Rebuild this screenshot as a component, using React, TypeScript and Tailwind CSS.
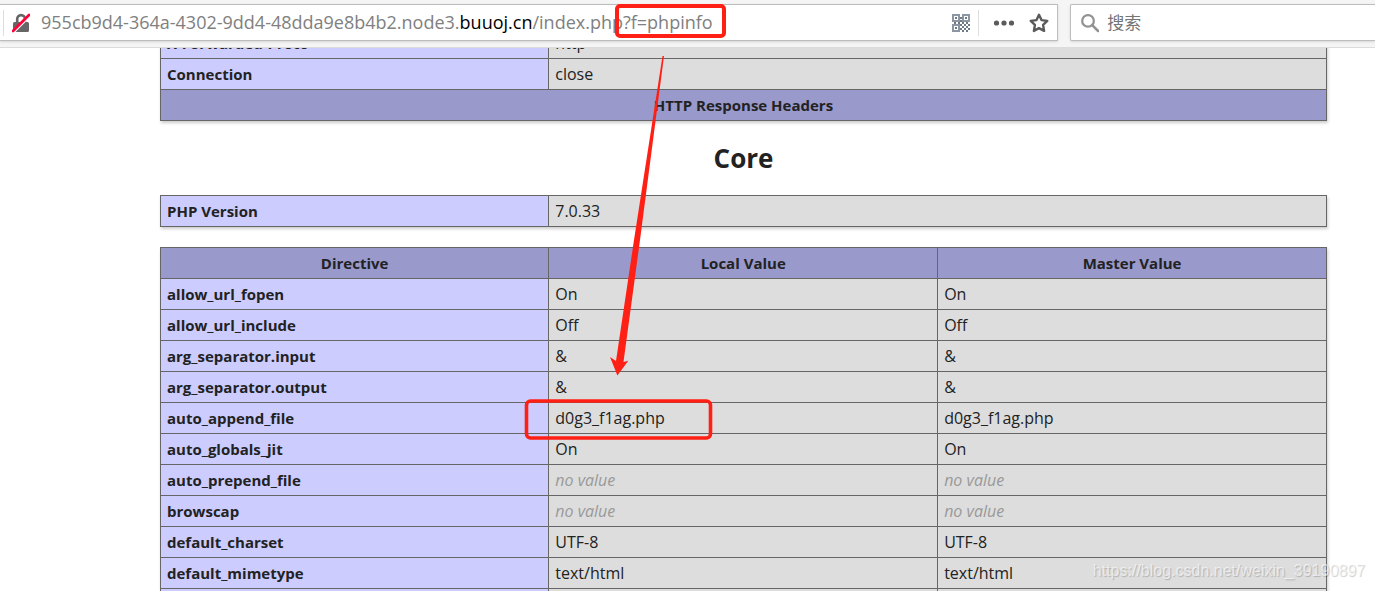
import React from 'react';

type Directive = { name: string; local?: string; master?: string };

const directives: Directive[] = [
  { name: 'allow_url_fopen', local: 'On', master: 'On' },
  { name: 'allow_url_include', local: 'Off', master: 'Off' },
  { name: 'arg_separator.input', local: '&', master: '&' },
  { name: 'arg_separator.output', local: '&', master: '&' },
  { name: 'auto_append_file', local: 'd0g3_f1ag.php', master: 'd0g3_f1ag.php' },
  { name: 'auto_globals_jit', local: 'On', master: 'On' },
  { name: 'auto_prepend_file' },
  { name: 'browscap' },
  { name: 'default_charset', local: 'UTF-8', master: 'UTF-8' },
  { name: 'default_mimetype', local: 'text/html', master: 'text/html' },
  { name: 'disable_classes' },
];

const tableClass = "w-full table-fixed border-collapse shadow-[1px_2px_3px_#ccc]";
const nameClass = "h-[31px] border border-[#666] bg-[#ccccff] px-1.5 text-left font-bold";
const valueClass = "h-[31px] border border-[#666] bg-[#dddddd] px-1.5 text-base leading-5";
const headClass = "h-[31px] border border-[#666] bg-[#9999cc] px-1.5 text-center font-bold";

const InsecureIcon: React.FC = () => (
  <svg width="18" height="20" viewBox="0 0 18 20" fill="none" aria-hidden="true">
    <path d="M5.200 10V6a3.900 3.900 0 0 1 7.800 0v4" stroke="#666" strokeWidth="2.600" />
    <rect x="1" y="9" width="16" height="10" rx="1.500" fill="#666" />
    <path d="M2.200 19.200 18.200 3.200" stroke="#fff" strokeWidth="1.500" />
    <path d="M1 18 17 2" stroke="#ff0039" strokeWidth="2.600" strokeLinecap="round" />
  </svg>
);

const QrIcon: React.FC = () => (
  <svg width="18" height="18" viewBox="0 0 18 18" fill="none" aria-hidden="true">
    <g stroke="#8c96a2" strokeWidth="2">
      <rect x="1" y="1" width="6" height="6" />
      <rect x="11" y="1" width="6" height="6" />
      <rect x="1" y="11" width="6" height="6" />
    </g>
    <path
      fill="#6f7a87"
      d="M3 3h2v2H3zM13 3h2v2h-2zM3 13h2v2H3zM8 3h2v2H8zM8 6h2v2H8zM2 8h2v2H2zM6 8h2v2H6zM10 8h2v2h-2zM14 8h2v2h-2zM8 10h2v2H8zM12 10h2v2h-2zM16 10h2v2h-2zM10 12h2v2h-2zM14 12h2v2h-2zM8 14h2v2H8zM12 14h2v2h-2zM16 14h2v2h-2zM10 16h2v2h-2zM14 16h2v2h-2z"
    />
  </svg>
);

const StarIcon: React.FC = () => (
  <svg width="20" height="20" viewBox="0 0 20 20" fill="none" aria-hidden="true">
    <path
      d="m10 1.800 2.500 5.300 5.800.8-4.200 4 1 6-5.100-2.800L4.900 17.900l1-6-4.200-4 5.800-.8z"
      stroke="#5b5b5b"
      strokeWidth="2.400"
      strokeLinejoin="round"
    />
  </svg>
);

const SearchIcon: React.FC = () => (
  <svg width="20" height="20" viewBox="0 0 20 20" fill="none" aria-hidden="true">
    <circle cx="7.700" cy="7.700" r="6.400" stroke="#929292" strokeWidth="2.500" />
    <path d="m12.300 12.300 6.500 6.500" stroke="#929292" strokeWidth="2.800" strokeLinecap="round" />
  </svg>
);

const Toolbar: React.FC = () => (
  <header className="relative z-10 flex h-12 shrink-0 items-start border-b border-[#dcdcdc] bg-[#f5f5f5] pt-1">
    <div className="flex h-[37px] w-[1058px] items-center border border-l-0 border-[#bdbdbd] bg-white pr-2 shadow-sm">
      <span className="mr-2 ml-[3px] h-[26px] w-px shrink-0 bg-[#dedede]" />
      <button type="button" aria-label="Connection is not secure" className="shrink-0">
        <InsecureIcon />
      </button>
      <p className="ml-[11px] min-w-0 flex-1 truncate pb-0.5 font-['Open_Sans','Noto_Sans',sans-serif] text-lg text-[#808080]">
        955cb9d4-364a-4302-9dd4-48dda9e8b4b2.node3.
        <span className="text-black">buuoj.cn</span>
        /index.php?f=phpinfo
      </p>
      <button type="button" aria-label="QR code" className="shrink-0">
        <QrIcon />
      </button>
      <span className="mx-2 h-[26px] w-px shrink-0 bg-[#dedede]" />
      <button type="button" aria-label="Page actions" className="ml-1.5 shrink-0">
        <svg width="22" height="6" viewBox="0 0 22 6" fill="#5b5b5b" aria-hidden="true">
          <circle cx="3.500" cy="3" r="2.600" />
          <circle cx="11" cy="3" r="2.600" />
          <circle cx="18.500" cy="3" r="2.600" />
        </svg>
      </button>
      <button type="button" aria-label="Bookmark" className="ml-3.5 shrink-0">
        <StarIcon />
      </button>
    </div>
    <label className="ml-3 flex h-[37px] flex-1 items-center rounded-l-xs border border-r-0 border-[#bdbdbd] bg-white pl-2.5 shadow-sm">
      <SearchIcon />
      <input
        type="text"
        aria-label="搜索"
        placeholder="搜索"
        className="ml-2 w-full min-w-0 pb-0.5 font-['Noto_Sans_CJK_SC',sans-serif] text-[17px] leading-6 outline-none placeholder:text-[#757575]"
      />
    </label>
  </header>
);

const Value: React.FC<{ text?: string }> = ({ text }) => (
  <td className={valueClass}>{text ?? <i className="text-[#999]">no value</i>}</td>
);

const App: React.FC = () => {
  return (
    <div className="relative flex h-screen flex-col overflow-hidden bg-white">
      <Toolbar />
      <main className="min-h-0 flex-1 overflow-hidden pr-12 pl-40 font-['Open_Sans','Noto_Sans',sans-serif] text-[15px] leading-5 text-[#222]">
        {/* page is scrolled, the first row is partly under the toolbar */}
        <table className={`-mt-[21px] ${tableClass}`}>
          <colgroup>
            <col className="w-[33.3%]" />
            <col />
          </colgroup>
          <tbody>
            <tr>
              <td className={nameClass}>X-Forwarded-Proto</td>
              <td className={valueClass}>http</td>
            </tr>
            <tr>
              <td className={nameClass}>Connection</td>
              <td className={valueClass}>close</td>
            </tr>
            <tr>
              <th colSpan={2} className={headClass}>HTTP Response Headers</th>
            </tr>
          </tbody>
        </table>
        <h2 className="flex h-[74px] items-center justify-center text-[26px] font-bold">Core</h2>
        <table className={tableClass}>
          <colgroup>
            <col className="w-[33.3%]" />
            <col />
          </colgroup>
          <tbody>
            <tr>
              <td className={nameClass}>PHP Version</td>
              <td className={valueClass}>7.0.33</td>
            </tr>
          </tbody>
        </table>
        <table className={`mt-5 ${tableClass}`}>
          <colgroup>
            <col className="w-[33.3%]" />
            <col />
            <col />
          </colgroup>
          <thead>
            <tr>
              <th className={headClass}>Directive</th>
              <th className={headClass}>Local Value</th>
              <th className={headClass}>Master Value</th>
            </tr>
          </thead>
          <tbody>
            {directives.map((d) => (
              <tr key={d.name}>
                <td className={nameClass}>{d.name}</td>
                <Value text={d.local} />
                <Value text={d.master} />
              </tr>
            ))}
          </tbody>
        </table>
      </main>

      {/* annotations */}
      <svg
        className="pointer-events-none absolute top-0 left-0 z-20"
        width="760"
        height="450"
        viewBox="0 0 760 450"
        fill="none"
        aria-hidden="true"
      >
        <rect x="617" y="6" width="107" height="30" rx="3" stroke="#ff2015" strokeWidth="4" />
        <rect x="526.500" y="401" width="184" height="37" rx="4" stroke="#ff2015" strokeWidth="3.600" />
        <path d="M662.500 56h1.500L640 240 623.500 362l4.800-1.300L617.400 375.500 610 357l6 4L634 240z" fill="#ff2015" />
      </svg>
      <p className="absolute right-2.5 bottom-2 z-20 font-['Liberation_Sans',sans-serif] text-base leading-6 text-white/60 [text-shadow:1px_1px_1px_rgba(0,0,0,0.2)]">
        https://blog.csdn.net/weixin_39190897
      </p>
    </div>
  );
};

export default App;
